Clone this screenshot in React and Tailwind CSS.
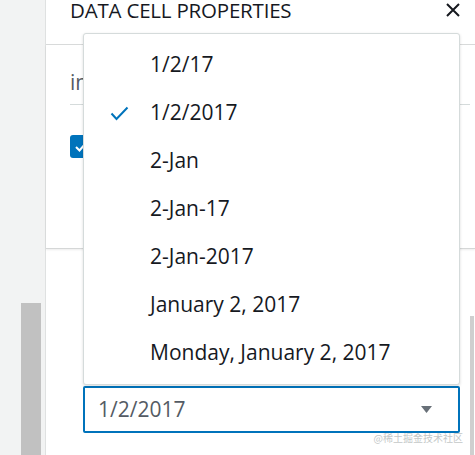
import React from "react";

const options = [
  "1/2/17",
  "1/2/2017",
  "2-Jan",
  "2-Jan-17",
  "2-Jan-2017",
  "January 2, 2017",
  "Monday, January 2, 2017",
];

const App = () => {
  const selected = "1/2/2017";

  return (
    <div className="relative flex h-[455px] w-[475px] overflow-hidden bg-white font-['Open_Sans',sans-serif] text-[#16191f]">
      {/* left grey rail */}
      <div className="flex h-full w-[45px] shrink-0 flex-col bg-[#f2f3f3] pl-[21px] pt-[303px]">
        <div className="h-full w-[20px] bg-[#c1c1c1]" />
      </div>

      <div className="flex h-full flex-1 flex-col border-l border-[#dfe1e1]">
        {/* header */}
        <div className="flex h-[45px] shrink-0 items-start justify-between border-b border-[#d9dbdb] pl-[24px] pr-[14px]">
          <h1 className="text-[20.5px] leading-[20px] tracking-[-0.2px]">DATA CELL PROPERTIES</h1>
          <svg className="mt-[3px]" width="16" height="14" viewBox="0 0 16 14" fill="none" stroke="#16191f" strokeWidth="2">
            <path d="M2 1l12 12M14 1L2 13" />
          </svg>
        </div>

        {/* card */}
        <div className="h-[204px] shrink-0 border-b border-[#d5d7d7] pl-[24px] pr-[5px] shadow-[0_1px_2px_rgba(0,0,0,0.08)]">
          <div className="mt-[23px] border-b border-[#d5dbdb] pb-[8px] text-[21px] leading-[28px] text-[#545b64]">
            in
          </div>
          <div className="mt-[30px] flex h-[23px] w-[22px] items-center justify-center rounded-[3px] bg-[#0073bb]">
            <svg width="12" height="10" viewBox="0 0 12 10" fill="none" stroke="white" strokeWidth="2">
              <path d="M1 5l3.5 3.5L11 1" />
            </svg>
          </div>
        </div>

        <div className="relative flex flex-1">
          <div className="ml-[37px] mt-[137px] h-[47px] w-[377px]">
            <div className="flex h-full items-center justify-between rounded-[2px] border-2 border-[#0073bb] pl-[13px] pr-[26px]">
              <span className="text-[21px] text-[#545b64]">{selected}</span>
              <svg width="11" height="7" viewBox="0 0 11 7">
                <path d="M0 0h11L5.5 7z" fill="#687078" />
              </svg>
            </div>
            <div className="mr-[-3px] mt-[-1px] text-right font-['Noto_Sans_CJK_SC',sans-serif] text-[10px] leading-[12px] text-[#c4c8c8]">
              @稀土掘金技术社区
            </div>
          </div>
          {/* scrollbar */}
          <div className="absolute right-[1px] top-[67px] bottom-0 w-[4px] bg-[#cfcfcf]" />
        </div>
      </div>

      {/* dropdown menu */}
      <ul className="absolute left-[83px] top-[33px] w-[377px] rounded-[3px] border border-[#d5dbdb] bg-white py-[7px] shadow-[0_1px_3px_rgba(0,0,0,0.15)]">
        {options.map((opt) => (
          <li key={opt} className="flex h-[48px] items-center">
            <span className="flex w-[66px] justify-center pl-[4px]">
              {opt === selected && (
                <svg width="19" height="15" viewBox="0 0 19 15" fill="none" stroke="#0073bb" strokeWidth="2">
                  <path d="M1.5 7.5l5 5.5L17.5 1.5" />
                </svg>
              )}
            </span>
            <span className="text-[21px] text-[#16191f]">{opt}</span>
          </li>
        ))}
      </ul>
    </div>
  );
};

export default App;
